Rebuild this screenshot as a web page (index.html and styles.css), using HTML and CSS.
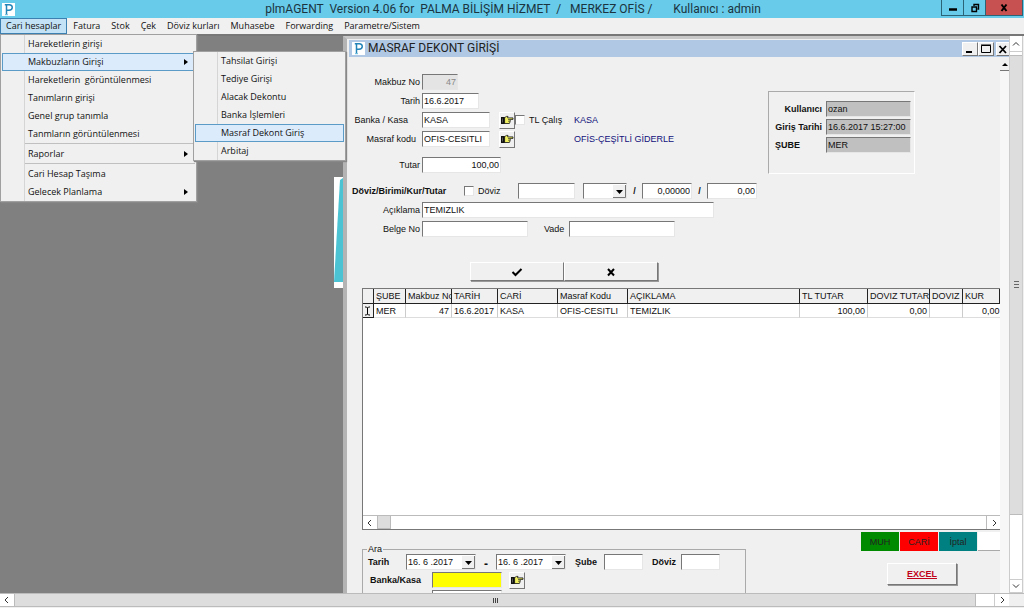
FILE: index.html
```html
<!DOCTYPE html>
<html lang="tr">
<head>
<meta charset="utf-8">
<title>plmAGENT</title>
<link rel="stylesheet" href="styles.css">
</head>
<body>
<svg class="defs" aria-hidden="true">
  <symbol id="logo" viewBox="0 0 13 13">
    <rect width="13" height="13" fill="#fff"/>
    <path d="M4.5 11.5V2.2M2.8 1.8H7.2C11.4 1.8 11.2 7.2 7 7.2H5" fill="none" stroke="#2384b8" stroke-width="1.5"/>
    <path d="M3 11.7H6" stroke="#63b8dc" stroke-width="1"/>
  </symbol>
  <symbol id="hand" viewBox="0 0 14 10">
    <path d="M1 2H5V9H1Z" fill="#111"/>
    <path d="M4.6 2.6L6.6 1.4H8L7.6 2.9H13V4.4H10.3L10.1 6.8L9.4 8.5H4.6Z" fill="#f0f060" stroke="#111" stroke-width=".8"/>
    <path d="M8 4.5H10M8 6.2H10" stroke="#333" stroke-width=".7"/>
    <path d="M2.5 3.5V7.5" stroke="#777" stroke-width=".7"/>
  </symbol>
</svg>

<header class="titlebar">
  <svg class="logo"><use href="#logo"/></svg>
  <h1 class="app-title">plmAGENT  Version 4.06 for  PALMA BİLİŞİM HİZMET  /   MERKEZ OFİS /       Kullanıcı : admin</h1>
  <div class="window-buttons">
    <button class="wb" aria-label="Simge durumuna küçült"><svg viewBox="0 0 10 10"><path d="M1 6.5H9" stroke="#000" stroke-width="2.5"/></svg></button>
    <button class="wb" aria-label="Geri yükle"><svg viewBox="0 0 10 10"><path d="M2 4H6.5V8.5H2ZM4 3V1.5H8.5V6H7.5" fill="none" stroke="#000" stroke-width="1.4"/></svg></button>
    <button class="wb close" aria-label="Kapat"><svg viewBox="0 0 10 10"><path d="M2.5 1.5L7.5 8M7.5 1.5L2.5 8" stroke="#000" stroke-width="2"/></svg></button>
  </div>
</header>

<nav class="menubar">
  <button class="menu-item open">Cari hesaplar</button>
  <button class="menu-item">Fatura</button>
  <button class="menu-item">Stok</button>
  <button class="menu-item">Çek</button>
  <button class="menu-item">Döviz kurları</button>
  <button class="menu-item">Muhasebe</button>
  <button class="menu-item">Forwarding</button>
  <button class="menu-item">Parametre/Sistem</button>
</nav>

<main class="workspace">
  <div class="desktop">
    <div class="wallpaper"><svg viewBox="0 0 9 111" preserveAspectRatio="none"><path d="M6 3L9 1V105H0Z" fill="#4cc3d3"/></svg></div>

    <section class="child">
      <header class="child-title">
        <svg class="logo"><use href="#logo"/></svg>
        <h2>MASRAF DEKONT GİRİŞİ</h2>
        <button class="cb" aria-label="Küçült"><svg viewBox="0 0 12 12"><path d="M2 9H8" stroke="#000" stroke-width="2"/></svg></button>
        <button class="cb" aria-label="Büyüt"><svg viewBox="0 0 12 12"><path d="M1.5 2.5H10.5V9.5H1.5Z" fill="none" stroke="#000"/><path d="M1 2H11" stroke="#000" stroke-width="1"/></svg></button>
        <button class="cb last" aria-label="Pencereyi kapat"><svg viewBox="0 0 12 12"><path d="M2.500 3L9 10M9 3L2.500 10" stroke="#000" stroke-width="1.8"/></svg></button>
      </header>

      <div class="child-body">
        <div class="content">
          <div class="top">
            <form class="fields">
              <div class="row"><label for="no">Makbuz No</label><input id="no" class="box w36 num" value="47" disabled></div>
              <div class="row"><label for="tarih">Tarih</label><input id="tarih" class="box w57" value="16.6.2017"></div>
              <div class="row"><label for="kasa" class="far">Banka / Kasa</label><input id="kasa" class="box w68" value="KASA">
                <button type="button" class="pick" aria-label="Kasa seç"><svg><use href="#hand"/></svg></button>
                <input type="checkbox" id="tl" class="check"><label for="tl" class="after">TL Çalış</label><span class="note">KASA</span></div>
              <div class="row"><label for="masraf" class="near">Masraf kodu</label><input id="masraf" class="box w68" value="OFIS-CESITLI">
                <button type="button" class="pick" aria-label="Masraf seç"><svg><use href="#hand"/></svg></button>
                <span class="note wide">OFİS-ÇEŞİTLİ GİDERLE</span></div>
              <div class="row apart"><label for="tutar">Tutar</label><input id="tutar" class="box w79 num" value="100,00"></div>
              <div class="row apart currency">
                <b>Döviz/Birimi/Kur/Tutar</b>
                <input type="checkbox" id="dvz" class="check"><label for="dvz" class="after">Döviz</label>
                <input class="box w57" aria-label="Döviz">
                <select class="box combo" aria-label="Birim"><option></option></select>
                <b class="slash">/</b><input class="box w50 num" value="0,00000" aria-label="Kur">
                <b class="slash">/</b><input class="box w50 num" value="0,00" aria-label="Döviz tutarı">
              </div>
              <div class="row"><label for="aciklama">Açıklama</label><input id="aciklama" class="box w292" value="TEMIZLIK"></div>
              <div class="row"><label for="belge">Belge No</label><input id="belge" class="box w106"><label for="vade" class="vade">Vade</label><input id="vade" class="box w106"></div>
            </form>
            <div class="user-box">
              <label for="u1">Kullanıcı</label><input id="u1" class="box grey" value="ozan" readonly>
              <label for="u2">Giriş Tarihi</label><input id="u2" class="box grey" value="16.6.2017 15:27:00" readonly>
              <label for="u3" class="left">ŞUBE</label><input id="u3" class="box grey" value="MER" readonly>
            </div>
          </div>

          <div class="actions">
            <button class="raised" aria-label="Onayla"><svg viewBox="0 0 12 10"><path d="M1.5 5L4.5 8L10.5 2" fill="none" stroke="#000" stroke-width="2"/></svg></button>
            <button class="raised" aria-label="Vazgeç"><svg viewBox="0 0 12 10"><path d="M3 2L9 8.5M9 2L3 8.5" stroke="#000" stroke-width="2"/></svg></button>
          </div>

          <div class="grid">
            <table>
              <colgroup><col class="c-ind"><col class="c-sube"><col class="c-no"><col class="c-no"><col class="c-cari"><col class="c-kod"><col><col class="c-tl"><col class="c-dt"><col class="c-dv"><col class="c-kur"></colgroup>
              <thead><tr><th></th><th>ŞUBE</th><th>Makbuz No</th><th>TARİH</th><th>CARİ</th><th>Masraf Kodu</th><th>AÇIKLAMA</th><th>TL TUTAR</th><th>DOVIZ TUTAR</th><th>DOVIZ</th><th>KUR</th></tr></thead>
              <tbody><tr><td class="ind"><svg viewBox="0 0 7 10"><path d="M1 1H2.5L3.5 2L4.5 1H6M3.5 2V8M1 9H2.5L3.5 8L4.5 9H6" fill="none" stroke="#000"/></svg></td><td>MER</td><td class="num">47</td><td>16.6.2017</td><td>KASA</td><td>OFIS-CESITLI</td><td>TEMIZLIK</td><td class="num">100,00</td><td class="num">0,00</td><td></td><td class="kur">0,00</td></tr></tbody>
            </table>
            <div class="grid-scroll">
              <button aria-label="Sola"><svg viewBox="0 0 8 8"><path d="M5 1L2 4L5 7" fill="none" stroke="#333"/></svg></button>
              <span class="grid-thumb"></span>
              <button class="end" aria-label="Sağa"><svg viewBox="0 0 8 8"><path d="M3 1L6 4L3 7" fill="none" stroke="#333"/></svg></button>
            </div>
          </div>

          <div class="bottom">
            <fieldset class="search">
              <legend>Ara</legend>
              <div class="search-row">
                <b class="s-label">Tarih</b>
                <select class="box date" aria-label="Başlangıç tarihi"><option>16. 6 .2017</option></select>
                <b class="dash">-</b>
                <select class="box date" aria-label="Bitiş tarihi"><option>16. 6 .2017</option></select>
                <label for="sube">Şube</label><input id="sube" class="box w38">
                <label for="doviz2" class="lead">Döviz</label><input id="doviz2" class="box w38">
              </div>
              <div class="search-row">
                <label for="bk" class="b-label">Banka/Kasa</label><input id="bk" class="box yellow">
                <button type="button" class="pick" aria-label="Banka seç"><svg><use href="#hand"/></svg></button>
              </div>
              <div class="search-row"><span class="box next"></span></div>
            </fieldset>
            <div class="side">
              <div class="status"><button class="muh">MUH</button><button class="cari">CARİ</button><button class="iptal">İptal</button><span class="blank"></span></div>
              <button class="raised excel">EXCEL</button>
            </div>
          </div>
        </div>
        <div class="inner-scroll"><button aria-label="Yukarı"><svg viewBox="0 0 8 12"><path d="M2 8L5 5L8 8Z" fill="#000"/></svg></button></div>
      </div>
    </section>
  </div>
  <div class="vscroll">
    <button aria-label="Yukarı kaydır"><svg viewBox="0 0 8 8"><path d="M1 5.5L4 2.5L7 5.5" fill="none" stroke="#333"/></svg></button>
    <span class="vthumb"><i></i><i></i><i></i></span>
    <button class="down" aria-label="Aşağı kaydır"><svg viewBox="0 0 8 8"><path d="M1 2.5L4 5.5L7 2.5" fill="none" stroke="#333"/></svg></button>
  </div>
</main>

<footer class="hscroll">
  <button aria-label="Sola kaydır"><svg viewBox="0 0 8 8"><path d="M5 1L2 4L5 7" fill="none" stroke="#333"/></svg></button>
  <span class="hthumb"><i></i><i></i><i></i></span>
  <span class="htrack"></span>
  <button aria-label="Sağa kaydır"><svg viewBox="0 0 8 8"><path d="M3 1L6 4L3 7" fill="none" stroke="#333"/></svg></button>
  <span class="corner"></span>
</footer>

<div class="popup main-menu" role="menu">
  <button role="menuitem">Hareketlerin girişi</button>
  <button role="menuitem" class="hot sub">Makbuzların Girişi</button>
  <button role="menuitem">Hareketlerin  görüntülenmesi</button>
  <button role="menuitem">Tanımların girişi</button>
  <button role="menuitem">Genel grup tanımla</button>
  <button role="menuitem">Tanmların görüntülenmesi</button>
  <hr>
  <button role="menuitem" class="sub">Raporlar</button>
  <hr>
  <button role="menuitem">Cari Hesap Taşıma</button>
  <button role="menuitem" class="sub">Gelecek Planlama</button>
</div>
<div class="popup sub-menu" role="menu">
  <button role="menuitem">Tahsilat Girişi</button>
  <button role="menuitem">Tediye Girişi</button>
  <button role="menuitem">Alacak Dekontu</button>
  <button role="menuitem">Banka İşlemleri</button>
  <button role="menuitem" class="hot">Masraf Dekont Giriş</button>
  <button role="menuitem">Arbitaj</button>
</div>
</body>
</html>
```

FILE: styles.css
```css
* { box-sizing: border-box; }
body {
  margin: 0;
  height: 100vh;
  display: flex;
  flex-direction: column;
  overflow: hidden;
  background: #f0f0f0;
  color: #111;
  font: 9px/12px "Liberation Sans", Arial, sans-serif;
}
button, input, select { font: inherit; color: inherit; margin: 0; padding: 0; border: 0; border-radius: 0; }
button { background: none; }
svg { display: block; }
.defs { position: absolute; width: 0; height: 0; }

/* application frame */
.titlebar { flex: none; height: 18px; display: flex; align-items: center; background: #68cbea; padding-left: 2px; }
.logo { flex: none; width: 13px; height: 13px; }
.app-title { flex: 1; margin: 0; text-align: center; white-space: pre; font: 12px/18px Roboto, "Noto Sans", sans-serif; color: #1b3440; padding-left: 70px; }
.window-buttons { align-self: flex-start; display: flex; height: 16px; margin-right: 1px; border: 1px solid #2b6377; border-top: 0; }
.wb { width: 22px; display: grid; place-items: center; border-right: 1px solid #2b6377; }
.wb svg { width: 10px; height: 10px; }
.wb.close { width: 36px; background: #c75050; border: 0; }

.menubar { flex: none; height: 18px; display: flex; gap: 1px; border-bottom: 2px solid #777; background: #f0f0f0; }
.menu-item { padding: 0 4px; font: 9px/14px "Open Sans", "Noto Sans", sans-serif; border: 1px solid transparent; }
.menu-item.open { background: #c3e2f5; border-color: #3c7fb1; padding: 0 5px; }

.workspace { flex: 1; min-height: 0; display: flex; }
.desktop { flex: 1; position: relative; overflow: hidden; background: #808080; }
.wallpaper { position: absolute; left: 334px; top: 141px; width: 9px; height: 111px; background: #fff; }
.wallpaper svg { width: 9px; height: 111px; }

/* form window */
.child { position: absolute; left: 343px; top: 0; right: 0; bottom: 0; display: flex; flex-direction: column; background: #f0f0f0; border-left: 4px solid #b4b4b4; border-top: 3px solid #c8c8c8; padding: 1px 0 0 2px; }
.child-title { flex: none; height: 17px; display: flex; align-items: center; background: #b0c8e4; padding-left: 3px; }
.child-title h2 { flex: 1; margin: 0 0 0 3px; font: 12px/17px Roboto, "Noto Sans", sans-serif; color: #222; }
.cb { width: 16px; height: 14px; display: grid; place-items: center; background: #f0f0f0; border: 1px solid; border-color: #fff #777 #777 #fff; }
.cb svg { width: 12px; height: 12px; }
.cb.last { width: 13px; margin-left: 2px; border-right: 0; }
.child-body { flex: 1; min-height: 0; display: flex; }
.content { flex: 1; min-width: 0; display: flex; flex-direction: column; padding: 17px 0 0 13px; }
.inner-scroll { flex: none; width: 9px; background: #f7f7f7; }
.inner-scroll button { display: block; width: 9px; height: 14px; background: #f0f0f0; border-bottom: 1px solid #777; }
.inner-scroll svg { width: 8px; height: 12px; }

.box { height: 16px; padding: 0 1px; background: #fff; border: 1px solid; border-color: #777 #e6e6e6 #e6e6e6 #777; outline: 0; }
.box:disabled { background: #e4e4e4; color: #888; }
.num { text-align: right; }
.w36 { width: 36px; } .w38 { width: 39px; } .w50 { width: 50px; } .w57 { width: 57px; } .w68 { width: 68px; }
.w79 { width: 79px; } .w106 { width: 106px; } .w292 { width: 292px; }

.top { flex: none; display: flex; gap: 10px; margin-left: -13px; }
.fields { flex: none; width: 409px; display: flex; flex-direction: column; gap: 3px; }
.row { display: flex; align-items: center; height: 16px; white-space: nowrap; }
.row > label:first-child { flex: none; width: 73px; padding-right: 2px; text-align: right; }
.row > label.far { padding-right: 14px; }
.row > label.near { padding-right: 6px; }
.apart { margin-top: 7px; }
.pick { flex: none; width: 16px; height: 17px; margin-left: 9px; display: grid; place-items: center; background: #f0f0f0; border: 1px solid; border-color: #fff #777 #777 #fff; }
.pick svg { width: 14px; height: 10px; }
.check { appearance: none; flex: none; width: 10px; height: 10px; background: #fff; border: 1px solid; border-color: #777 #e6e6e6 #e6e6e6 #777; }
.row .after { width: 45px; margin-left: 4px; }
.note { color: #10107c; }
.note.wide { margin-left: 59px; }
.currency b:first-child { width: 115px; padding-left: 3px; }
.currency .after { width: 40px; }
.combo { width: 44px; margin-left: 8px; }
.combo, .date {
  appearance: none;
  background: #fff url("data:image/svg+xml,%3Csvg xmlns='http://www.w3.org/2000/svg' width='13' height='13'%3E%3Cpath d='M0 0h13v13H0z' fill='%23f0f0f0'/%3E%3Cpath d='M12.5 0v12.500H0' fill='none' stroke='%23777'/%3E%3Cpath d='M3 5h7L6.500 9z'/%3E%3C/svg%3E") no-repeat right center;
}
.slash { width: 15px; text-align: center; }
.vade { width: 41px; padding-left: 16px; }

.user-box { flex: none; align-self: flex-start; width: 147px; height: 83px; margin-top: 17px; padding: 9px 4px 0 3px; display: grid; grid-template-columns: 50px 85px; grid-auto-rows: 16px; gap: 2px 4px; align-items: center; border: 1px solid; border-color: #aaa #fff #fff #aaa; font-weight: bold; white-space: nowrap; }
.user-box label { text-align: right; }
.user-box .left { text-align: left; padding-left: 3px; }
.grey { background: #c0c0c0; width: 85px; font-weight: normal; }

.raised { background: #f0f0f0; border: 1px solid; border-color: #fff #777 #777 #fff; box-shadow: 1px 1px 0 #999; }
.actions { flex: none; display: flex; margin: 25px 0 7px 108px; }
.actions .raised { width: 94px; height: 19px; display: grid; place-items: center; }
.actions svg { width: 12px; height: 10px; }

.grid { flex: none; height: 242px; display: flex; flex-direction: column; justify-content: space-between; background: #fff; border: 1px solid #777; border-right: 0; }
table { width: 100%; table-layout: fixed; border-collapse: separate; border-spacing: 0; }
th, td { height: 15px; padding: 0 2px; line-height: 12px; overflow: hidden; white-space: nowrap; text-align: left; font-weight: normal; border-right: 1px solid #ccc; border-bottom: 1px solid #ddd; }
th { background: #f0f0f0; border-right-color: #222; border-bottom-color: #222; padding-right: 0; }
td { height: 14px; }
td.num { text-align: right; }
td.ind { background: #f0f0f0; padding: 0 1px; border-color: #222; }
.ind svg { width: 7px; height: 10px; }
td.kur { padding: 0 0 0 19px; border-right: 0; }
.c-ind { width: 11px; } .c-sube { width: 32px; } .c-no { width: 46px; } .c-cari { width: 60px; } .c-kod { width: 70px; }
.c-tl { width: 68px; } .c-dt { width: 62px; } .c-dv { width: 33px; } .c-kur { width: 37px; }
.grid-scroll { height: 14px; display: flex; border-top: 1px solid #bbb; }
.grid-scroll button { width: 14px; display: grid; place-items: center; }
.grid-scroll svg, .vscroll svg, .hscroll svg { width: 8px; height: 8px; }
.grid-scroll .end { margin-left: auto; border-left: 1px solid #bbb; }
.grid-thumb { width: 14px; background: #ddd; border: 1px solid #bbb; border-top: 0; }

.bottom { flex: 1; min-height: 0; display: flex; justify-content: space-between; overflow: hidden; }
.search { flex: none; width: 384px; height: 90px; margin: 14px 0 0; padding: 0 0 0 5px; border: 1px solid #aaa; min-width: 0; }
.search legend { padding: 0 1px; margin-left: -1px; line-height: 10px; }
.search-row { display: flex; align-items: center; height: 16px; margin-bottom: 2px; font-weight: bold; white-space: nowrap; }
.search-row .box { font-weight: normal; }
.s-label { width: 38px; }
.date { width: 70px; }
.dash { width: 20px; text-align: center; font-size: 12px; line-height: 12px; align-self: flex-end; }
.search-row label { margin: 0 7px 0 9px; }
.search-row label.lead { margin-right: 5px; }
.search-row label.b-label { width: 62px; margin: 0 0 0 2px; }
.yellow { width: 70px; background: #ff0; }
.search-row .pick { margin-left: 7px; }
.next { width: 70px; margin-left: 64px; }
.side { display: flex; flex-direction: column; align-items: flex-end; padding-top: 2px; }
.status { display: flex; width: 139px; height: 19px; }
.status button { width: 38px; margin-right: 1px; color: #222; }
.muh { background: #008a00; } .cari { background: #f00; } .iptal { background: #008080; }
.blank { flex: 1; background: #fff; border-bottom: 1px solid #aaa; }
.excel { width: 70px; height: 22px; margin: 12px 43px 0 0; color: #c00018; font-weight: bold; font-size: 9px; text-decoration: underline; }

/* application scroll bars */
.vscroll { flex: none; width: 14px; margin-right: 1px; display: flex; flex-direction: column; background: #fff; border: 1px solid #ccc; border-width: 0 1px; }
.vscroll button { height: 16px; display: grid; place-items: center; border-bottom: 1px solid #ccc; }
.vscroll .down { height: 14px; margin-top: auto; border: 1px solid #ccc; border-width: 1px 0; }
.vthumb { height: 460px; margin-top: 3px; flex: 0 1 460px; display: flex; flex-direction: column; gap: 1px; align-items: center; justify-content: center; background: #ddd; border: 1px solid #bbb; border-width: 1px 0; }
.vthumb i { width: 5px; height: 2px; background: #666; border-bottom: 1px solid #ddd; }
.hscroll { flex: none; height: 14px; margin-bottom: 1px; display: flex; background: #fff; border: 1px solid #bbb; border-width: 1px 0; }
.hscroll button { flex: none; width: 14px; display: grid; place-items: center; }
.hthumb { flex: 1; display: flex; gap: 1px; align-items: center; justify-content: center; background: #ddd; border: 1px solid #bbb; border-width: 0 1px; }
.hthumb i { width: 1px; height: 5px; background: #444; }
.htrack { width: 19px; border-right: 1px solid #ccc; }
.corner { width: 15px; background: #f0f0f0; }

/* drop-down menus */
.popup { position: absolute; display: flex; flex-direction: column; padding: 0 1px; border: 1px solid #a0a0a0; background: linear-gradient(#d5d5d5, #d5d5d5) no-repeat 23px 0 / 1px 100%, #f0f0f0; box-shadow: 1px 1px 1px #888; font: 9px/16px "Open Sans", "Noto Sans", sans-serif; white-space: pre; }
.main-menu { left: 0; top: 34px; width: 197px; }
.sub-menu { left: 193px; top: 51px; width: 153px; }
.popup button { position: relative; height: 18px; padding-left: 25px; text-align: left; border: 1px solid transparent; white-space: pre; }
.popup .hot { background: #dcebfc; border-color: #5b9bc8; }
.popup .sub::after { content: ""; position: absolute; right: 6px; top: 5px; border: 3px solid transparent; border-left: 4px solid #000; border-right: 0; }
.popup hr { width: 170px; margin: 0 0 1px 23px; border: 0; border-top: 1px solid #c0c0c0; }
```
